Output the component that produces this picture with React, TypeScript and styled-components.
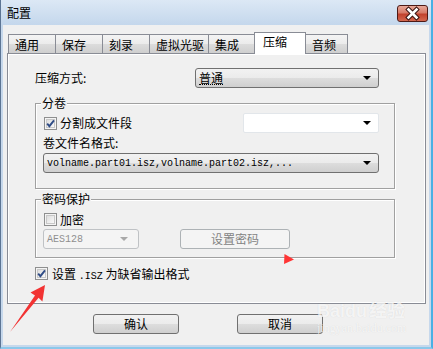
import styled, { createGlobalStyle } from "styled-components";

const GlobalStyle = createGlobalStyle`
  html, body {
    margin: 0;
    padding: 0;
    background: #ffffff;
  }
  body {
    font-family: "Noto Sans CJK SC", "Noto Sans", sans-serif;
    font-size: 12px;
    color: #000;
  }
`;

const tabs = [
  { label: "通用", width: 48 },
  { label: "保存", width: 48 },
  { label: "刻录", width: 48 },
  { label: "虚拟光驱", width: 60 },
  { label: "集成", width: 47 },
  { label: "压缩", width: 52, active: true },
  { label: "音频", width: 43 },
];

const CheckBox = ({ checked }: { checked?: boolean }) => (
  <BoxIcon width="13" height="13" viewBox="0 0 13 13">
    <defs>
      <linearGradient id="cbg" x1="0" y1="0" x2="1" y2="1">
        <stop offset="0" stopColor="#dcdcdc" />
        <stop offset="1" stopColor="#fbfbfb" />
      </linearGradient>
    </defs>
    <rect x="0.5" y="0.5" width="12" height="12" fill="#f4f4f4" stroke="#8e8f8f" />
    <rect x="2.5" y="2.5" width="8" height="8" fill="url(#cbg)" stroke="#c8c8c8" />
    {checked && (
      <path
        d="M3.2 6.6 L5.4 9.2 L10 3.4"
        fill="none"
        stroke="#2f4c86"
        strokeWidth="1.9"
      />
    )}
  </BoxIcon>
);

const Arrow = ({ color = "#000" }: { color?: string }) => (
  <ArrowIcon width="8" height="4" viewBox="0 0 8 4">
    <polygon points="0,0 8,0 4,4" fill={color} />
  </ArrowIcon>
);

export default function App() {
  return (
    <>
      <GlobalStyle />
      <Window>
        <TitleBar>
          <TitleText>配置</TitleText>
          <CloseButton>
            <svg width="31" height="17" viewBox="0 0 31 17">
              <path
                d="M11.5 4.5 L19.5 12.5 M19.5 4.5 L11.5 12.5"
                stroke="#3a1512"
                strokeWidth="4.6"
                strokeLinecap="square"
              />
              <path
                d="M11.5 4.5 L19.5 12.5 M19.5 4.5 L11.5 12.5"
                stroke="#ffffff"
                strokeWidth="2.6"
                strokeLinecap="square"
              />
            </svg>
          </CloseButton>
        </TitleBar>

        <Client>
          <TabRow>
            {tabs.map((t) => (
              <Tab key={t.label} $width={t.width} $active={t.active}>
                {t.label}
              </Tab>
            ))}
          </TabRow>

          <Panel>
            <FieldRow>
              <FieldLabel>压缩方式:</FieldLabel>
              <Combo $width={184}>
                <FocusText>普通</FocusText>
                <Arrow />
              </Combo>
            </FieldRow>

            <Group $height={86} $padTop={9}>
              <Legend>分卷</Legend>
              <FieldRow>
                <Check>
                  <CheckBox checked />
                  分割成文件段
                </Check>
                <WhiteCombo>
                  <Arrow />
                </WhiteCombo>
              </FieldRow>
              <LineLabel>卷文件名格式:</LineLabel>
              <Combo $width={336}>
                <Mono>volname.part01.isz,volname.part02.isz,...</Mono>
                <Arrow />
              </Combo>
            </Group>

            <Group $height={59} $padTop={10} $gap={10}>
              <Legend>密码保护</Legend>
              <CheckRow>
                <Check>
                  <CheckBox />
                  加密
                </Check>
              </CheckRow>
              <FieldRow>
                <DisabledCombo>
                  <Mono>AES128</Mono>
                  <Arrow color="#a8a8a8" />
                </DisabledCombo>
                <DisabledButton>设置密码</DisabledButton>
              </FieldRow>
            </Group>

            <MainCheck>
              <CheckBox checked />
              <span>
                设置 <Mono>.ISZ</Mono> 为缺省输出格式
              </span>
            </MainCheck>
          </Panel>

          <ButtonRow>
            <PushButton>确认</PushButton>
            <PushButton>取消</PushButton>
          </ButtonRow>
        </Client>

        <Annotation width="433" height="349" viewBox="0 0 433 349">
          <polygon
            points="45,285 30.5,292.5 35,295.6 10,332 38.6,297.8 42.4,301.6"
            fill="#f23333"
          />
          <polygon points="284.5,254 294,259.5 284,264" fill="#ff3535" />
        </Annotation>

        <Watermark>
          <WatermarkLogo>
            Bai<WatermarkDu>du</WatermarkDu>经验
          </WatermarkLogo>
          <WatermarkUrl>jingyan.baidu.com</WatermarkUrl>
        </Watermark>
      </Window>
    </>
  );
}

const Window = styled.div`
  position: relative;
  width: 433px;
  height: 349px;
  box-sizing: border-box;
  display: flex;
  flex-direction: column;
  background: #c6d8ec;
  border-left: 1px solid #5d7594;
  border-right: 2px solid #49b0e4;
  border-bottom: 2px solid #8cc8ea;
  overflow: hidden;
`;

const TitleBar = styled.div`
  height: 25px;
  flex: none;
  display: flex;
  align-items: flex-start;
  background: linear-gradient(#dce8f5, #c4d7ec);
`;

const TitleText = styled.div`
  margin: 5px 0 0 6px;
  font-size: 12px;
  line-height: 16px;
`;

const CloseButton = styled.div`
  margin: 5px 3px 0 auto;
  width: 31px;
  height: 17px;
  box-sizing: border-box;
  border: 1px solid #4d1a16;
  border-radius: 3px;
  background: linear-gradient(#e8a89a 0%, #d77b68 45%, #c2422d 55%, #d4684f 100%);
  display: flex;
  align-items: center;
  justify-content: center;
  overflow: hidden;
  svg {
    margin: -1px;
  }
`;

const Client = styled.div`
  flex: 1;
  margin: 0 2px 2px 2px;
  background: #f0f0f0;
  display: flex;
  flex-direction: column;
  padding-top: 7px;
`;

const TabRow = styled.div`
  display: flex;
  align-items: flex-end;
  height: 22px;
  padding-left: 5px;
  position: relative;
  z-index: 1;
`;

const Tab = styled.div<{ $width: number; $active?: boolean }>`
  width: ${(p) => p.$width}px;
  box-sizing: border-box;
  height: ${(p) => (p.$active ? 22 : 19)}px;
  margin-bottom: ${(p) => (p.$active ? 0 : 1)}px;
  padding-left: ${(p) => (p.$active ? 8 : 6)}px;
  border: 1px solid #898c95;
  border-bottom: none;
  margin-right: -1px;
  background: ${(p) =>
    p.$active ? "#ffffff" : "linear-gradient(#f4f4f4 0%, #ebebeb 50%, #dcdcdc 51%, #cfcfcf 100%)"};
  font-size: 12px;
  line-height: ${(p) => (p.$active ? 17 : 19)}px;
  position: relative;
  z-index: ${(p) => (p.$active ? 2 : 1)};
`;

const Panel = styled.div`
  margin: -1px 0 0 4px;
  width: 419px;
  height: 251px;
  box-sizing: border-box;
  border: 1px solid #898c95;
  box-shadow: inset 1px 1px 0 #ffffff, inset -1px -1px 0 #ffffff;
  padding: 14px 0 0 27px;
  display: flex;
  flex-direction: column;
`;

const FieldRow = styled.div`
  display: flex;
  align-items: center;
  height: 20px;
`;

const CheckRow = styled(FieldRow)`
  height: 19px;
`;

const FieldLabel = styled.div`
  width: 160px;
  line-height: 20px;
`;

const LineLabel = styled.div`
  height: 20px;
  line-height: 20px;
`;

const Combo = styled.div<{ $width: number }>`
  width: ${(p) => p.$width}px;
  height: 20px;
  box-sizing: border-box;
  border: 1px solid #707070;
  border-radius: 3px;
  background: linear-gradient(#f2f2f2 0%, #ebebeb 50%, #dddddd 51%, #cfcfcf 100%);
  display: flex;
  align-items: center;
  padding: 0 7px 0 3px;
`;

const WhiteCombo = styled.div`
  margin-left: auto;
  width: 136px;
  height: 20px;
  box-sizing: border-box;
  border: 1px solid #e2e6ea;
  border-radius: 2px;
  background: #ffffff;
  display: flex;
  align-items: center;
  padding-right: 7px;
`;

const DisabledCombo = styled.div`
  width: 96px;
  height: 20px;
  box-sizing: border-box;
  border: 1px solid #bfc2c5;
  border-radius: 3px;
  background: #f4f4f4;
  color: #8f8f8f;
  display: flex;
  align-items: center;
  padding: 0 10px 0 3px;
`;

const DisabledButton = styled.div`
  margin-left: 41px;
  width: 110px;
  height: 20px;
  box-sizing: border-box;
  border: 1px solid #adb2b5;
  border-radius: 3px;
  background: #f4f4f4;
  color: #838383;
  text-align: center;
  line-height: 18px;
`;

const FocusText = styled.span`
  line-height: 13px;
  border-bottom: 1px dotted #000;
`;

const Mono = styled.span`
  font-family: "Liberation Mono", "DejaVu Sans Mono", monospace;
  font-size: 10px;
`;

const ArrowIcon = styled.svg`
  margin-left: auto;
  display: block;
  flex: none;
`;

const BoxIcon = styled.svg`
  display: block;
  flex: none;
`;

const Group = styled.div<{ $height: number; $padTop: number; $gap?: number }>`
  position: relative;
  margin-top: ${(p) => p.$gap ?? 15}px;
  width: 360px;
  height: ${(p) => p.$height}px;
  box-sizing: border-box;
  border: 1px solid #a0a0a0;
  box-shadow: 1px 1px 0 #ffffff, inset 1px 1px 0 #ffffff;
  padding: ${(p) => p.$padTop}px 15px 0 7px;
  display: flex;
  flex-direction: column;
`;

const Legend = styled.div`
  position: absolute;
  top: -8px;
  left: 5px;
  padding: 0 1px;
  background: #f0f0f0;
  line-height: 14px;
`;

const Check = styled.div`
  display: flex;
  align-items: center;
  gap: 3px;
  padding-left: 1px;
  line-height: 20px;
`;

const MainCheck = styled.div`
  margin-top: 5px;
  height: 20px;
  display: flex;
  align-items: center;
  gap: 4px;
`;

const ButtonRow = styled.div`
  margin-top: 10px;
  padding-left: 90px;
  display: flex;
  gap: 58px;
`;

const PushButton = styled.div`
  width: 86px;
  height: 20px;
  box-sizing: border-box;
  border: 1px solid #707070;
  border-radius: 3px;
  background: linear-gradient(#f2f2f2 0%, #ebebeb 50%, #dddddd 51%, #cfcfcf 100%);
  text-align: center;
  line-height: 18px;
  font-size: 12px;
`;

const Annotation = styled.svg`
  position: absolute;
  left: -1px;
  top: 0;
  pointer-events: none;
`;

const Watermark = styled.div`
  position: absolute;
  left: 316px;
  top: 300px;
  color: rgba(255, 255, 255, 0.75);
  text-shadow: 0 0 1px rgba(0, 0, 0, 0.12);
  pointer-events: none;
`;

const WatermarkLogo = styled.div`
  font-family: "Liberation Sans", "Noto Sans CJK SC", sans-serif;
  font-size: 18px;
  font-weight: bold;
  line-height: 22px;
`;

const WatermarkDu = styled.span`
  margin-right: 2px;
`;

const WatermarkUrl = styled.div`
  font-family: "Liberation Serif", serif;
  font-size: 12px;
  line-height: 12px;
`;
